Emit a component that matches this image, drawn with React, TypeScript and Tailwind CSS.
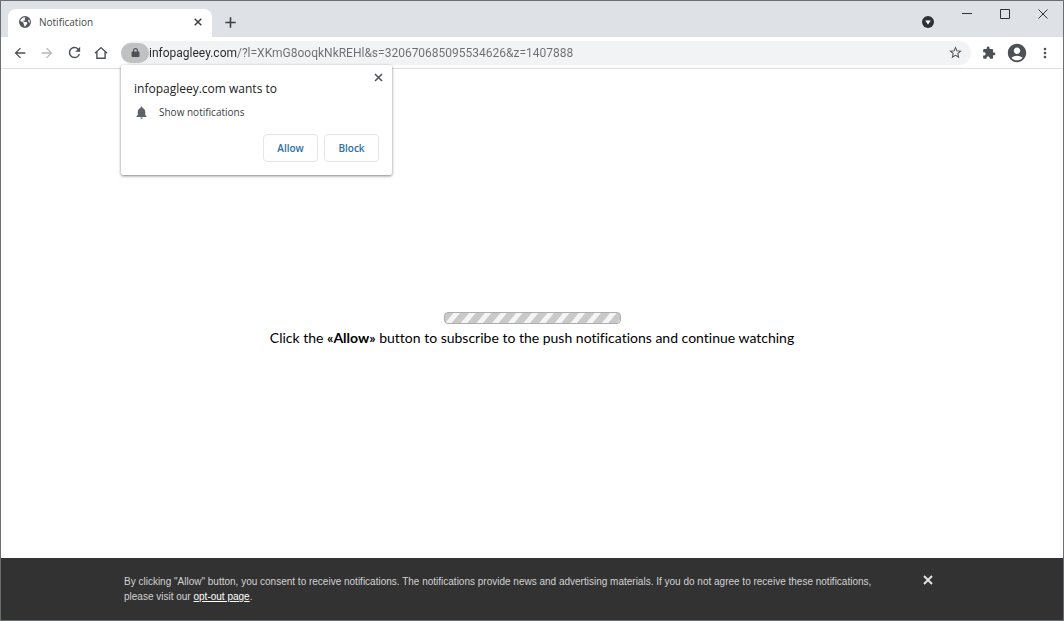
import type { ReactNode } from "react";
import { FaEarthAmericas, FaLock } from "react-icons/fa6";
import {
  MdArrowBack,
  MdArrowForward,
  MdAccountCircle,
  MdExtension,
  MdMoreVert,
  MdNotifications,
  MdRefresh,
  MdStarBorder,
} from "react-icons/md";

interface IconButtonProps {
  label: string;
  className?: string;
  disabled?: boolean;
  children: ReactNode;
}

const PAGE_URL = "infopagleey.com/?l=XKmG8ooqkNkREHl&s=320670685095534626&z=1407888";

function IconButton({ label, className = "", disabled = false, children }: IconButtonProps) {
  return (
    <button
      type="button"
      aria-label={label}
      disabled={disabled}
      className={`flex shrink-0 items-center justify-center ${className}`}
    >
      {children}
    </button>
  );
}

function HomeIcon() {
  return (
    <svg width="14" height="14" viewBox="0 0 14 14" fill="none" stroke="currentColor" strokeWidth="1.4">
      <path d="M.9 7.3 7 1.6l6.1 5.7M2.9 5.8v6.5h8.2V5.8" />
    </svg>
  );
}

function TabStrip() {
  return (
    <div className="flex h-9 items-end bg-[#dee1e6] pl-[7px]">
      <div className="flex h-7 w-51 items-center rounded-t-lg bg-white pr-1.5 pb-0.5 pl-[11px]">
        <FaEarthAmericas size={12} className="mr-2 shrink-0 text-[#54585d]" />
        <span className="flex-1 text-[10px] text-[#45484d]">Notification</span>
        <IconButton label="Close tab" className="h-4 w-4 text-[#3c4043]">
          <svg width="8" height="8" viewBox="0 0 8 8" stroke="currentColor" strokeWidth="1.5">
            <path d="m.7.7 6.6 6.6M7.3.7.7 7.3" />
          </svg>
        </IconButton>
      </div>
      <IconButton label="New tab" className="ml-2 h-7 w-5 pb-px text-[#3c4043]">
        <svg width="11" height="11" viewBox="0 0 11 11" stroke="currentColor" strokeWidth="1.6">
          <path d="M5.5.3v10.4M.3 5.5h10.4" />
        </svg>
      </IconButton>
      <div className="flex-1" />
      <IconButton label="Search tabs" className="mr-2 h-7 w-6 pb-0.5">
        <svg width="12" height="12" viewBox="0 0 12 12">
          <circle cx="6" cy="6" r="6" fill="#2f3136" />
          <path d="M3.2 4.4h5.6L6 8.6z" fill="#fff" />
        </svg>
      </IconButton>
      <div className="flex self-start pr-px text-[#303236]">
        <IconButton label="Minimize" className="h-[26px] w-[38px]">
          <svg width="10" height="10" viewBox="0 0 10 10" stroke="currentColor">
            <path d="M0 4.5h10" />
          </svg>
        </IconButton>
        <IconButton label="Maximize" className="h-[26px] w-[38px]">
          <svg width="10" height="10" viewBox="0 0 10 10" fill="none" stroke="currentColor">
            <path d="M.5.5h9v9h-9z" />
          </svg>
        </IconButton>
        <IconButton label="Close" className="h-[26px] w-[38px]">
          <svg width="10" height="10" viewBox="0 0 10 10" stroke="currentColor">
            <path d="m.5.5 9 9M9.5.5l-9 9" />
          </svg>
        </IconButton>
      </div>
    </div>
  );
}

function Toolbar() {
  return (
    <div className="relative flex h-8 items-center border-b border-[#dcdde0] bg-white pr-2 pl-[7px] text-[#4d5156]">
      <div className="flex w-[113px] shrink-0 gap-[3px]">
        <IconButton label="Back" className="h-6 w-6">
          <MdArrowBack size={16} />
        </IconButton>
        <IconButton label="Forward" disabled className="h-6 w-6 text-[#b4b6b9]">
          <MdArrowForward size={16} />
        </IconButton>
        <IconButton label="Reload" className="h-6 w-6">
          <MdRefresh size={17} />
        </IconButton>
        <IconButton label="Home" className="h-6 w-6">
          <HomeIcon />
        </IconButton>
      </div>
      <div className="flex h-6 min-w-0 flex-1 items-center rounded-full bg-[#f1f3f4] pr-2">
        <IconButton label="Site information" className="h-5 w-7 rounded-full bg-[#bfc1c3]">
          <FaLock size={9} />
        </IconButton>
        {/* host is darker than the path */}
        <input
          type="text"
          aria-label="Address"
          defaultValue={PAGE_URL}
          className="min-w-0 flex-1 bg-[linear-gradient(to_right,#27292d_88px,#6b6f74_88px)] bg-clip-text font-['Roboto',sans-serif] text-xs text-transparent outline-none"
        />
        <IconButton label="Bookmark this page" className="h-5 w-4">
          <MdStarBorder size={15} />
        </IconButton>
      </div>
      <IconButton label="Extensions" className="ml-2.5 h-6 w-4">
        <MdExtension size={14} />
      </IconButton>
      <IconButton label="Profile" className="ml-2 h-6 w-6">
        <MdAccountCircle size={22} />
      </IconButton>
      <IconButton label="Menu" className="ml-1.5 h-6 w-5">
        <MdMoreVert size={16} />
      </IconButton>
      <PermissionPrompt />
    </div>
  );
}

function PermissionPrompt() {
  return (
    <div
      role="dialog"
      aria-labelledby="prompt-title"
      className="absolute top-7 left-30 w-[271px] rounded-xs bg-white px-[13px] pt-4 pb-[13px] text-[#3c4043] shadow-[0_1px_3px_rgba(0,0,0,0.5)]"
    >
      <IconButton label="Dismiss" className="absolute top-0.5 right-1 h-5 w-5 text-[#4d5156]">
        <svg width="9" height="9" viewBox="0 0 9 9" stroke="currentColor" strokeWidth="1.5">
          <path d="m1 1 7 7M8 1 1 8" />
        </svg>
      </IconButton>
      <h2 id="prompt-title" className="text-xs leading-4 text-[#202124]">
        infopagleey.com wants to
      </h2>
      <p className="mt-[7px] flex items-center gap-2.5 text-[10px] leading-4">
        <MdNotifications size={15} className="shrink-0 text-[#5f6368]" />
        Show notifications
      </p>
      <div className="mt-3.5 flex justify-end gap-1.5">
        <button type="button" className="h-7 w-[55px] rounded border border-[#e4e5e8] text-[10px] font-semibold text-[#2a6fa8]">
          Allow
        </button>
        <button type="button" className="h-7 w-[55px] rounded border border-[#e4e5e8] text-[10px] font-semibold text-[#2a6fa8]">
          Block
        </button>
      </div>
    </div>
  );
}

function ConsentBar() {
  return (
    <footer className="bg-[#323232] py-4">
      <div className="mx-auto flex w-full max-w-[816px] items-start justify-between">
        <p className="max-w-[776px] font-['Liberation_Sans',Arial,sans-serif] text-[10px] leading-[15px] text-[#d2d2d2]">
          By clicking "Allow" button, you consent to receive notifications. The notifications provide news and
          advertising materials. If you do not agree to receive these notifications,
          <br />
          please visit our{" "}
          <a href="#opt-out" className="text-white underline">
            opt-out page
          </a>
          .
        </p>
        <IconButton label="Close notice" className="h-3 w-6 text-[#e2e2e2]">
          <svg width="10" height="10" viewBox="0 0 10 10" stroke="currentColor" strokeWidth="2">
            <path d="m1 1 8 8M9 1 1 9" />
          </svg>
        </IconButton>
      </div>
    </footer>
  );
}

export default function App() {
  return (
    <div className="flex min-h-screen flex-col border border-[#6b6d72] bg-white font-['Open_Sans',sans-serif]">
      <TabStrip />
      <Toolbar />
      <main className="flex flex-1 flex-col items-center justify-center gap-1 px-4 pt-10 pb-2">
        <div
          role="progressbar"
          aria-label="Loading"
          className="h-3 w-[177px] rounded-sm border border-[#adadad] bg-[repeating-linear-gradient(130deg,#c9c9c9_0px,#c9c9c9_6px,#f5f5f5_7px,#f5f5f5_11px,#c9c9c9_12px)]"
        />
        <p className="text-center font-['Lato',sans-serif] text-sm leading-5 text-black [font-variant-ligatures:none]">
          Click the <b>«Allow»</b> button to subscribe to the push notifications and continue watching
        </p>
      </main>
      <ConsentBar />
    </div>
  );
}
